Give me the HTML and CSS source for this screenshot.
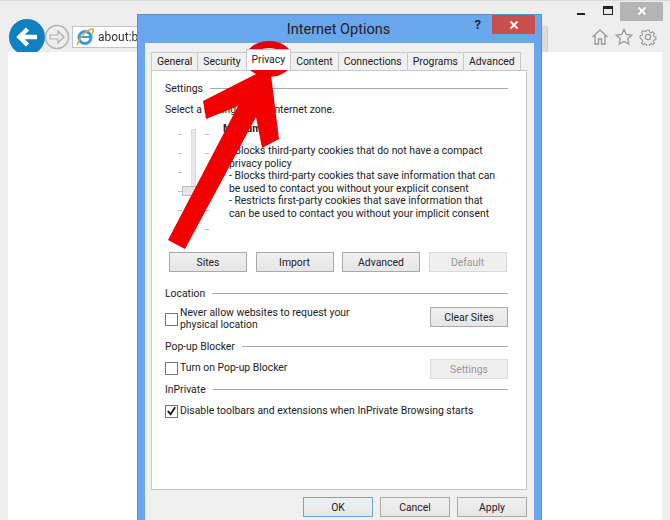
FILE: index.html
```html
<!DOCTYPE html>
<html lang="en">
<head>
<meta charset="utf-8">
<title>Internet Options</title>
<link rel="stylesheet" href="styles.css">
</head>
<body>
<div class="browser">
  <div class="winctl">
    <span class="min"></span>
    <span class="max"></span>
    <span class="close"><svg width="10" height="10" viewBox="0 0 10 10"><path d="M1.500 1.500l7 7M8.500 1.500l-7 7" stroke="#fff" stroke-width="1.800"/></svg></span>
  </div>
  <div class="toolbar">
    <div class="back"><svg width="36" height="36" viewBox="0 0 36 36"><circle cx="18" cy="18" r="18" fill="#1180c0"/><path d="M28 18H11M18.500 10l-8 8 8 8" fill="none" stroke="#fff" stroke-width="4.500"/></svg></div>
    <div class="forward"><svg width="26" height="26" viewBox="0 0 26 26"><circle cx="13" cy="13" r="11.500" fill="#eee" stroke="#b4b4b4" stroke-width="1.500"/><path d="M20 11h-8V7l-6 6 6 6v-4h8z" transform="rotate(180 13 13)" fill="none" stroke="#b0b0b0" stroke-width="1.200"/></svg></div>
    <div class="address">
      <svg width="20" height="20" viewBox="0 0 20 20"><circle cx="10" cy="10.500" r="6" fill="none" stroke="#3a9ad9" stroke-width="3"/><path d="M5 10h10" stroke="#3a9ad9" stroke-width="2"/><path d="M2 18C5 10 12 2 18 2c1.500 1-.500 4-1.500 6" fill="none" stroke="#e0b030" stroke-width="1.500"/></svg>
      <span>about:blank</span>
    </div>
    <div class="btab"></div>
    <div class="spacer"></div>
    <div class="tools">
      <svg width="18" height="18" viewBox="0 0 18 18"><path d="M1.500 9L9 2l7.500 7M4 7.500V16h3.500v-5h3v5H14V7.500" fill="none" stroke="#9a9a9a" stroke-width="1.300"/></svg>
      <svg width="18" height="18" viewBox="0 0 18 18"><path d="M9 1.500l2.300 5 5.400.6-4 3.600 1.100 5.400L9 13.400l-4.800 2.700 1.100-5.400-4-3.600 5.400-.6z" fill="none" stroke="#9a9a9a" stroke-width="1.300"/></svg>
      <svg width="18" height="18" viewBox="0 0 18 18"><circle cx="9" cy="9" r="2.600" fill="none" stroke="#9a9a9a" stroke-width="1.200"/><path d="M7.600 1.500h2.800l.4 2.200 1.500.7 1.900-1.200 2 2-1.200 1.900.6 1.500 2.200.4v2.800l-2.200.4-.6 1.500 1.200 1.900-2 2-1.900-1.200-1.500.6-.4 2.200H7.600l-.4-2.200-1.500-.6-1.900 1.200-2-2 1.200-1.900-.6-1.500L.200 10.400V7.600l2.200-.4.6-1.500-1.200-1.900 2-2 1.900 1.200 1.500-.7z" transform="translate(.9 .9) scale(.9)" fill="none" stroke="#9a9a9a" stroke-width="1.200"/></svg>
    </div>
  </div>
  <div class="page"></div>
</div>

<div class="dialog">
  <div class="titlebar">
    <span class="title">Internet Options</span>
    <span class="help">?</span>
    <span class="dclose"><svg width="10" height="10" viewBox="0 0 10 10"><path d="M1.500 1.500l7 7M8.500 1.500l-7 7" stroke="#fff" stroke-width="1.800"/></svg></span>
  </div>
  <div class="client">
    <div class="tabs">
      <span class="tab">General</span>
      <span class="tab">Security</span>
      <span class="tab active">Privacy</span>
      <span class="tab">Content</span>
      <span class="tab">Connections</span>
      <span class="tab">Programs</span>
      <span class="tab">Advanced</span>
    </div>
    <div class="panel">
      <div class="group"><span>Settings</span><i></i></div>
      <p class="zone">Select a setting for the Internet zone.</p>
      <div class="settings">
        <div class="slider">
          <div class="ticks"><b></b><b></b><b></b><b></b><b></b><b></b></div>
          <div class="track"><span class="thumb"></span></div>
          <div class="ticks"><b></b><b></b><b></b><b></b><b></b><b></b></div>
        </div>
        <div class="desc">
          <div class="level">Medium</div>
          <p>- Blocks third-party cookies that do not have a compact<br>privacy policy<br>- Blocks third-party cookies that save information that can<br>be used to contact you without your explicit consent<br>- Restricts first-party cookies that save information that<br>can be used to contact you without your implicit consent</p>
        </div>
      </div>
      <div class="btnrow">
        <button class="btn">Sites</button>
        <button class="btn">Import</button>
        <button class="btn">Advanced</button>
        <button class="btn off">Default</button>
      </div>
      <div class="group loc"><span>Location</span><i></i></div>
      <div class="locrow">
        <span class="check"></span>
        <span class="lbl two">Never allow websites to request your<br>physical location</span>
        <button class="btn push">Clear Sites</button>
      </div>
      <div class="group pop"><span>Pop-up Blocker</span><i></i></div>
      <div class="poprow">
        <span class="check"></span>
        <span class="lbl">Turn on Pop-up Blocker</span>
        <button class="btn off push">Settings</button>
      </div>
      <div class="group inp"><span>InPrivate</span><i></i></div>
      <div class="inprow">
        <span class="check"><svg width="12" height="12" viewBox="0 0 12 12"><path d="M2 6l3 3.500L10 2" fill="none" stroke="#111" stroke-width="2"/></svg></span>
        <span class="lbl">Disable toolbars and extensions when InPrivate Browsing starts</span>
      </div>
    </div>
    <div class="footer">
      <button class="btn def">OK</button>
      <button class="btn">Cancel</button>
      <button class="btn">Apply</button>
    </div>
  </div>
</div>

<svg class="arrow" width="670" height="520" viewBox="0 0 670 520">
  <path d="M168 240L238 106 206 119 203 101 270 67 279 139 262 148 256 117 185 249z" fill="#f00000"/>
  <ellipse cx="269" cy="59" rx="20.500" ry="14.500" fill="none" stroke="#e80000" stroke-width="7"/>
</svg>
</body>
</html>
```
FILE: styles.css
```css
* { box-sizing: border-box; }
html, body { margin: 0; height: 520px; overflow: hidden; }
body { position: relative; background: #eeeeee; font-family: Roboto, "Open Sans", sans-serif; font-size: 10.400px; color: #222; filter: blur(.35px); }
p { margin: 0; }
.browser { height: 520px; display: flex; flex-direction: column; border-top: 1px solid #dcdcdc; position: relative; }
.winctl { position: absolute; top: 0; right: 7px; display: flex; align-items: center; height: 20px; }
.winctl .min { width: 8px; height: 2px; background: #222; margin-right: 18px; margin-top: 6px; }
.winctl .max { width: 10px; height: 9px; border: 1px solid #222; border-top-width: 3px; margin-right: 7px; margin-top: -2px; }
.winctl .close { width: 43px; height: 19px; background: #b4b4b4; display: flex; align-items: center; justify-content: center; }
.toolbar { height: 51px; display: flex; align-items: flex-start; padding: 18px 13px 0 9px; }
.back { width: 36px; height: 36px; }
.forward { width: 26px; height: 26px; margin: 5px 0 0 -1px; }
.address { width: 160px; height: 22px; margin: 7px 0 0 2px; padding-left: 2px; background: #fff; border: 1px solid #c4c4c4; display: flex; align-items: center; gap: 3px; font-size: 12px; color: #333; }
.btab { width: 316px; height: 26px; margin-top: 7px; background: #dcdcdc; border-right: 1px solid #cfcfcf; }
.spacer { flex: 1; }
.tools { display: flex; gap: 6px; margin-top: 9px; }
.page { flex: 1; margin: 0 8px; background: #fff; }

.dialog { position: absolute; left: 137px; top: 14px; width: 405px; height: 520px; background: #6aa6ec; border: 1px solid #5a90d0; padding: 0 7px; }
.titlebar { height: 28px; position: relative; display: flex; justify-content: center; align-items: center; }
.title { font-size: 14.500px; color: #222; margin-right: 2px; }
.help { position: absolute; right: 53px; top: 2px; font-weight: 700; font-size: 13px; color: #223; }
.dclose { position: absolute; right: -1px; top: 0; width: 43px; height: 19px; background: #c94f4f; display: flex; align-items: center; justify-content: center; }
.client { height: 480px; background: #f0f0f0; padding: 9px 7px 0 6px; display: flex; flex-direction: column; }
.tabs { height: 18px; display: flex; position: relative; z-index: 1; }
.tab { height: 18px; padding: 2px 5px 0; background: #f0f0f0; border: 1px solid #c8c8c8; border-bottom: 0; margin-right: -1px; line-height: 14px; white-space: nowrap; }
.tab.active { background: #fff; height: 21px; margin-top: -3px; position: relative; padding: 3px 5px 0; }
.panel { height: 420px; background: #fff; border: 1px solid #c8c8c8; padding: 10px 18px 0 13px; }
.group { display: flex; align-items: center; gap: 7px; height: 14px; }
.group i { flex: 1; height: 1px; background: #a8a8a8; }
.zone { margin-top: 8px; line-height: 14px; }
.settings { display: flex; height: 129px; margin-top: 1px; }
.slider { flex: none; width: 56px; display: flex; justify-content: center; padding: 11px 0 0; gap: 9px; }
.ticks { display: flex; flex-direction: column; gap: 18px; padding-top: 5px; }
.ticks b { display: block; width: 4px; height: 1px; background: #bbb; }
.track { width: 5px; height: 90px; background: #e8e8e8; border: 1px solid #ddd; position: relative; }
.thumb { position: absolute; left: -10px; top: 56px; width: 16px; height: 10px; background: #e4e4e4; border: 1px solid #bbb; }
.desc { flex: 1; padding-left: 8px; }
.level { font-weight: 700; line-height: 14px; margin: 4px 0 9px -6px; }
.desc p { line-height: 12.500px; white-space: nowrap; }
.btn { width: 78px; height: 20px; padding: 0; font: inherit; color: #222; background: linear-gradient(#f0f0f0, #e6e6e6); border: 1px solid #aaa; }
.btn.off { color: #999; background: #efefef; border-color: #dadada; }
.btnrow { display: flex; gap: 8.500px; margin: 5px 0 0 4px; }
.loc { margin-top: 14px; }
.locrow, .poprow, .inprow { display: flex; align-items: center; }
.locrow { margin-top: 6px; height: 26px; }
.poprow { margin-top: 5px; height: 20px; }
.inprow { margin-top: 8px; height: 14px; }
.check { width: 13px; height: 13px; background: #fff; border: 1px solid #777; margin-right: 2px; flex: none; display: flex; align-items: center; justify-content: center; }
.lbl { line-height: 12.500px; white-space: nowrap; }
.push { margin-left: auto; align-self: flex-start; margin-top: 1px; }
.pop { margin-top: 7px; }
.inp { margin-top: 4px; }
.footer { display: flex; justify-content: flex-end; gap: 7px; padding-top: 7px; }
.footer .btn { width: 70px; }
.btn.def { border: 1px solid #6aa6e0; }
.arrow { position: absolute; left: 0; top: 0; }
```
